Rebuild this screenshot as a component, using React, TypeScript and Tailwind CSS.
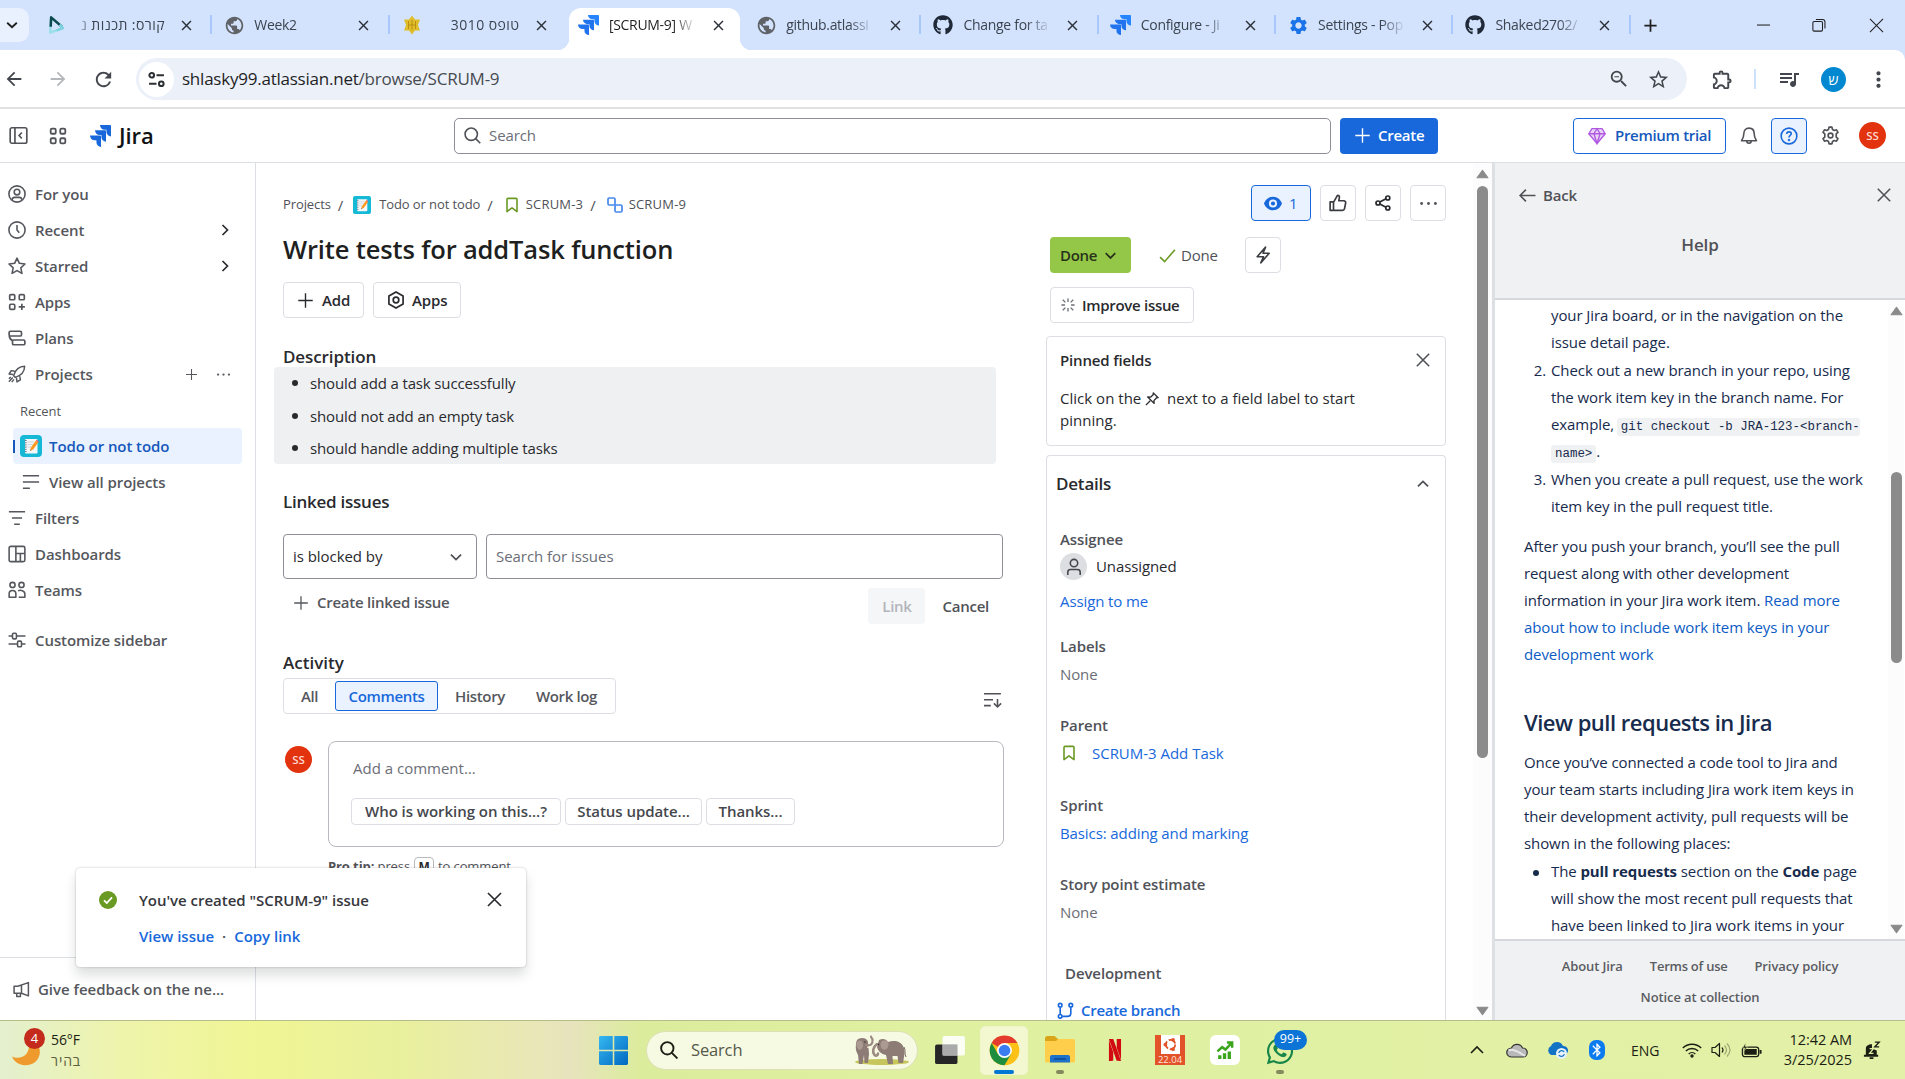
import React from "react";
import {
  MdPublic, MdSettings, MdOutlineExtension, MdQueueMusic, MdZoomOut, MdStarBorder, MdMoreVert,
  MdArrowBack, MdArrowForward, MdRefresh, MdClose, MdAdd, MdBluetooth,
} from "react-icons/md";
import { FaGithub, FaWhatsapp } from "react-icons/fa";
import { SiNetflix } from "react-icons/si";

type IconProps = { children: React.ReactNode; className?: string; sw?: number };

/* 16-unit outline icon */
const I = ({ children, className = "size-[18px]", sw = 1.4 }: IconProps) => (
  <svg viewBox="0 0 16 16" fill="none" stroke="currentColor" strokeWidth={sw} className={`shrink-0 ${className}`}>
    {children}
  </svg>
);

const Plus = ({ className }: { className?: string }) => <I className={className} sw={1.3}><path d="M8 1.2v13.6M1.2 8h13.6" /></I>;
const Cross = ({ className }: { className?: string }) => <I className={className} sw={1.4}><path d="m2.5 2.5 11 11M13.5 2.5l-11 11" /></I>;
const Chevron = ({ className }: { className?: string }) => <I className={className} sw={1.6}><path d="m3.5 5.8 4.5 4.5 4.5-4.5" /></I>;
const Dots = ({ className }: { className?: string }) => (
  <I className={className}><g fill="currentColor" stroke="none"><circle cx="2.2" cy="8" r="1.2" /><circle cx="8" cy="8" r="1.2" /><circle cx="13.8" cy="8" r="1.2" /></g></I>
);
const Bookmark = ({ className }: { className?: string }) => (
  <I className={className} sw={1.6}><path d="M3 14.6V2.4c0-.6.4-1 1-1h8c.6 0 1 .4 1 1v12.2L8 10.8z" strokeLinejoin="round" /></I>
);

const JiraMark = ({ className, a = "#1868db", b = "#2684ff" }: { className?: string; a?: string; b?: string }) => (
  <svg viewBox="0 0 24 24" className={`shrink-0 ${className}`} preserveAspectRatio="none">
    <path fill={a} d="M11.571 11.513H0a5.218 5.218 0 0 0 5.232 5.215h2.13v2.057A5.215 5.215 0 0 0 12.575 24V12.518a1.005 1.005 0 0 0-1.005-1.005z" />
    <path fill={a} d="M17.294 5.757H5.736a5.215 5.215 0 0 0 5.215 5.214h2.129v2.058a5.218 5.218 0 0 0 5.215 5.214V6.758a1.001 1.001 0 0 0-1.001-1.001z" />
    <path fill={b} d="M23.013 0H11.455a5.215 5.215 0 0 0 5.215 5.215h2.129v2.057A5.215 5.215 0 0 0 24 12.483V1.005A1.001 1.001 0 0 0 23.013 0z" />
  </svg>
);

const Notepad = ({ className }: { className?: string }) => (
  <svg viewBox="0 0 22 22" className={`shrink-0 ${className}`}>
    <rect width="22" height="22" rx="2.5" fill="#15b9d6" />
    <rect x="5" y="4" width="12.5" height="14.5" rx="1" fill="#f4f7fa" />
    <path d="M7.5 7h7M7.5 9.5h6M7.5 12h4" stroke="#c3ccd6" strokeWidth="0.8" />
    <path d="M5 5.5h1.6M5 7.7h1.6M5 9.9h1.6M5 12.1h1.6M5 14.3h1.6M5 16.5h1.6" stroke="#44546f" strokeWidth="0.8" />
    <path d="m10.2 15.8.6-3 5-7 2.4 1.7-5 7z" fill="#ff9a1f" />
    <path d="m15.8 5.8.8-1 2.3 1.6-.7 1.1z" fill="#ef5b5b" />
    <path d="m10.2 15.8.3-1.4 1 .7z" fill="#333" />
  </svg>
);

/* ------------------------------ browser chrome ------------------------------ */

const Globe = () => <MdPublic className="size-[21px] text-[#5f6368]" />;

type Tab = { icon: React.ReactNode; title: string; active?: boolean; rtl?: boolean; sep?: boolean };
const TABS: Tab[] = [
  {
    icon: (
      <svg viewBox="0 0 20 22" className="h-[22px] w-[18px]" fill="none" strokeLinejoin="round" strokeWidth="2.8">
        <path d="M3.5 2.5 2.5 19.5l14-5" stroke="#9adfe9" /><path d="M3 13 3.500 2.500l12 10.500" stroke="#0c4a50" />
        <path d="m13 10.500 3.500 4-7 2.500" stroke="#7fd2df" />
      </svg>
    ),
    title: "קורס: תכנות נ", rtl: true, sep: true,
  },
  { icon: <Globe />, title: "Week2", sep: true },
  {
    icon: (
      <svg viewBox="0 0 20 20" className="size-[20px]">
        <path d="m10 .5 3 4h5l-2 5.500 2 5.500h-5l-3 4-3-4H2l2-5.500L2 4.500h5z" fill="#e0bd2a" />
        <path d="M6.500 6v8M10 5v10M13.500 6v8M6 10h8" stroke="#b58c10" strokeWidth=".9" />
      </svg>
    ),
    title: "טופס 3010", rtl: true,
  },
  { icon: <JiraMark className="h-[20px] w-[21px]" a="#2173ee" />, title: "[SCRUM-9] W", active: true },
  { icon: <Globe />, title: "github.atlassi", sep: true },
  { icon: <FaGithub className="size-[20px] text-[#1f2937]" />, title: "Change for ta", sep: true },
  { icon: <JiraMark className="h-[20px] w-[21px]" a="#2173ee" />, title: "Configure - Ji", sep: true },
  { icon: <MdSettings className="size-[21px] text-[#1a73e8]" />, title: "Settings - Pop", sep: true },
  { icon: <FaGithub className="size-[20px] text-[#1f2937]" />, title: "Shaked2702/", sep: true },
];

function TabStrip() {
  return (
    <div className="flex h-[50px] bg-[#d3e3fd]">
      <div className="mt-2 flex h-[34px] w-[29px] shrink-0 items-center rounded-r-[10px] bg-[#e9f0fe] pl-[5px]">
        <I className="size-[14px] text-[#1f1f1f]" sw={2.2}><path d="m2.500 5.500 5.500 5 5.500-5" /></I>
      </div>
      <div className="ml-[5px] flex">
        {TABS.map((t, i) => (
          <div key={i} className="relative mt-2 flex h-[42px] w-[177.3px] items-center">
            {t.active && (
              <>
                <span className="absolute inset-y-0 right-[3px] left-[3px] rounded-t-[12px] bg-white" />
                <span className="absolute bottom-0 left-[-9px] size-3 bg-[radial-gradient(circle_at_0_0,transparent_12px,white_12.5px)]" />
                <span className="absolute right-[-9px] bottom-0 size-3 bg-[radial-gradient(circle_at_100%_0,transparent_12px,white_12.5px)]" />
              </>
            )}
            <span className="relative ml-[12px] flex w-[22px] justify-center pb-2">{t.icon}</span>
            <span
              dir={t.rtl ? "rtl" : "ltr"}
              className={`relative mb-2 ml-[9px] w-[88px] text-[14px] leading-[24px] whitespace-nowrap ${t.active ? "text-[#1f1f1f]" : "text-[#3c4450]"} ${t.rtl ? "tracking-[0.45px] [mask-image:linear-gradient(to_left,black_84%,transparent)]" : "tracking-[-0.3px] [mask-image:linear-gradient(to_right,black_72%,transparent)]"}`}
            >
              {t.title}
            </span>
            <MdClose className="relative mb-2 ml-[13px] size-[17px] text-[#2b2f36]" />
            {t.sep && <span className="absolute top-[7px] right-[-1px] h-[19px] w-[2px] bg-[#a8c7fa]" />}
          </div>
        ))}
      </div>
      <div className="flex flex-1 items-center text-[#1f1f1f]">
        <MdAdd className="ml-[10px] size-[21px]" />
        <I className="ml-[95px] size-[15px]" sw={1.1}><path d="M1 7.500h14" /></I>
        <I className="ml-[41px] size-[14px]" sw={1.2}><rect x="1" y="4" width="11" height="11" rx="1.500" /><path d="M4.500 1.600h7.500a2.800 2.800 0 0 1 2.800 2.800V12" /></I>
        <I className="ml-[43px] size-[15px]" sw={1.1}><path d="m1 1 14 14M15 1 1 15" /></I>
      </div>
    </div>
  );
}

function Toolbar() {
  return (
    <div className="h-[59px] bg-[#d3e3fd]">
      <div className="flex h-[59px] items-center rounded-tr-[10px] border-b-2 border-[#e0e1e3] bg-white pt-[1px] text-[#43474d]">
        <MdArrowBack className="ml-[3px] size-[22px]" />
        <MdArrowForward className="ml-[22px] size-[22px] text-[#b4b7bb]" />
        <MdRefresh className="ml-[23px] size-[23px]" />
        <div className="ml-[21px] flex h-[42px] w-[1551px] items-center rounded-full bg-[#ebf0f9]">
          <span className="ml-[3px] flex size-[35px] items-center justify-center rounded-full bg-white">
            <I className="size-[17px] text-[#2c2f33]" sw={1.9}><circle cx="3.500" cy="4" r="2.200" /><path d="M8 4h7M1 12h7" /><circle cx="12.500" cy="12" r="2.200" /></I>
          </span>
          <span className="ml-[8px] flex-1 text-[17px] tracking-[-0.23px] text-[#1f1f1f]">
            shlasky99.atlassian.net<span className="text-[#474b50]">/browse/SCRUM-9</span>
          </span>
          <MdZoomOut className="mr-[17px] size-[22px]" />
          <MdStarBorder className="mr-[17px] size-[23px]" />
        </div>
        <MdOutlineExtension className="ml-[24px] size-[23px]" />
        <span className="ml-[20px] h-[20px] w-[2px] bg-[#cfe0fb]" />
        <MdQueueMusic className="ml-[21px] size-[24px]" />
        <span className="ml-[20px] flex size-[25px] items-center justify-center rounded-full bg-[#0288d1] text-[14px] text-white">ש</span>
        <MdMoreVert className="ml-[20px] size-[25px]" />
      </div>
    </div>
  );
}

/* ------------------------------ Jira top bar ------------------------------ */

const Avatar = ({ className = "" }: { className?: string }) => (
  <span className={`flex size-[27px] shrink-0 items-center justify-center rounded-full bg-[#e2330e] text-[11.5px] font-semibold text-[#ffd9cf] ${className}`}>SS</span>
);

function JiraNav() {
  return (
    <div className="flex h-[54px] items-center border-b border-[#dcdfe4] text-[#505258]">
      <I className="ml-[9px] size-[19px]"><rect x="1" y="1.500" width="14" height="13" rx="1.500" /><path d="M5 1.500v13M10.800 5.500 8.500 8l2.300 2.500" /></I>
      <I className="ml-[21px] size-[18px]" sw={1.6}><rect x="1.500" y="1.500" width="4.500" height="4.500" rx="1.200" /><rect x="10" y="1.500" width="4.500" height="4.500" rx="1.200" /><rect x="1.500" y="10" width="4.500" height="4.500" rx="1.200" /><rect x="10" y="10" width="4.500" height="4.500" rx="1.200" /></I>
      <JiraMark className="ml-[23px] h-[22px] w-[21px]" b="#1868db" />
      <span className="ml-[8px] w-[37px] pb-[2px] text-[22px] leading-[28px] font-semibold tracking-[-0.1px] text-[#101214]">Jira</span>
      <div className="ml-[298px] flex h-[36px] w-[877px] items-center rounded-[5px] border border-[#8c8f97] pl-[9px]">
        <I className="size-[17px]" sw={1.5}><circle cx="6.800" cy="6.800" r="5.800" /><path d="m11 11 4.300 4.300" /></I>
        <span className="ml-[8px] text-[15px] tracking-[-0.1px] text-[#6b6e76]">Search</span>
      </div>
      <button className="ml-[9px] flex h-[36px] w-[98px] items-center rounded-[4px] bg-[#1868db] pl-[14px] text-[15px] font-semibold tracking-[-0.25px] text-white">
        <Plus className="mr-[7px] size-[17px]" />Create
      </button>
      <button className="ml-[135px] flex h-[36px] w-[153px] items-center rounded-[4px] border border-[#1868db] pl-[14px] text-[15px] font-semibold tracking-[-0.3px] text-[#1558bc]">
        <I className="mr-[9px] size-[18px] text-[#af59e0]" sw={1.2}><path fill="#ead5f9" d="M3.500 1.500h9L15.300 6 8 14.700.7 6z" strokeLinejoin="round" /><path d="M.7 6h14.600M5.200 6 8 14.500 10.800 6 8 1.500z" /></I>
        Premium trial
      </button>
      <I className="ml-[14px] size-[18px]"><path d="M8 1C5 1 3.400 3.200 3.400 6c0 3-.9 4.500-2 6.200h13.200c-1.100-1.700-2-3.200-2-6.200C12.600 3.200 11 1 8 1zM6 12.500a2 2 0 0 0 4 0" strokeLinejoin="round" /></I>
      <span className="ml-[13px] flex h-[36px] w-[36px] items-center justify-center rounded-[4px] border border-[#1868db] bg-[#e9f2fe] text-[#1868db]">
        <I className="size-[18px]"><circle cx="8" cy="8" r="7" /><path d="M6 6.300C6 5 6.900 4.300 8 4.300s2 .7 2 1.800C10 7.500 8 7.600 8 9.300" /><circle cx="8" cy="11.500" r=".4" /></I>
      </span>
      <I className="ml-[14px] size-[19px]"><path d="M6.800 1h2.400l.5 2 1.400.8 2-.6 1.200 2.100L12.800 6.700v2.600l1.500 1.400-1.200 2.100-2-.6-1.400.8-.5 2H6.800l-.5-2-1.400-.8-2 .6-1.200-2.100 1.500-1.400V6.700L1.700 5.300l1.200-2.100 2 .6L6.300 3z" strokeLinejoin="round" /><circle cx="8" cy="8" r="2" /></I>
      <Avatar className="ml-[19px]" />
    </div>
  );
}

/* ------------------------------ sidebar ------------------------------ */

const StarIcon = <I><path d="m8 1 2.100 4.600 5 .6-3.700 3.400 1 5L8 12.100l-4.400 2.500 1-5L.9 6.200l5-.6z" strokeLinejoin="round" /></I>;

function NavRow({ icon, label, right }: { icon: React.ReactNode; label: string; right?: React.ReactNode }) {
  return (
    <div className="flex h-[36px] shrink-0 items-center pl-[8px]">
      {icon}
      <span className="ml-[9px] flex-1">{label}</span>
      {right}
    </div>
  );
}

const ChevR = <I className="mr-[22px] size-[16px] text-[#292a2e]" sw={1.7}><path d="M5.500 3 10.500 8l-5 5" /></I>;

function Sidebar() {
  return (
    <aside className="flex w-[256px] shrink-0 flex-col border-r border-[#dcdfe4] pt-[13px] text-[15px] font-semibold tracking-[-0.08px] text-[#55575d]">
      <NavRow label="For you" icon={<I><circle cx="8" cy="8" r="7.200" /><circle cx="8" cy="6.300" r="2.500" /><path d="M3.500 13.300c.3-1.700 1.300-2.300 2.500-2.300h4c1.200 0 2.200.6 2.500 2.300" /></I>} />
      <NavRow label="Recent" right={ChevR} icon={<I><circle cx="8" cy="8" r="7.200" /><path d="M8 3.500V8l2 2.500" /></I>} />
      <NavRow label="Starred" right={ChevR} icon={StarIcon} />
      <NavRow label="Apps" icon={<I sw={1.5}><rect x="1.500" y="1.500" width="4.500" height="4.500" rx="1" /><rect x="10" y="1.500" width="4.500" height="4.500" rx="1" /><rect x="1.500" y="10" width="4.500" height="4.500" rx="1" /><path d="M12.300 9.500v5.500M9.500 12.300H15" /></I>} />
      <NavRow label="Plans" icon={<I sw={1.5}><rect x="1" y="2" width="11" height="4.200" rx="1.200" /><rect x="4" y="9.800" width="11" height="4.200" rx="1.200" /><path d="M1.200 6c0 2.300 1 3.500 3 4.500" /></I>} />
      <NavRow
        label="Projects"
        icon={<I sw={1.3}><path d="M5 9.500C6.500 4.500 9.500 1.300 14.800 1.200c-.1 5.300-3.300 8.300-8.300 9.800zM6 5.500 2.800 5 1 8l3.500.5M10.500 10l.5 3.200L8 15l-.5-3.500M4.200 11.200.8 14.800M2.500 10.700l-1.700 1.500M5.300 12.800l-2 2.400" strokeLinejoin="round" /></I>}
        right={<><Plus className="size-[13px]" /><Dots className="mr-[24px] ml-[18px] size-[15px]" /></>}
      />
      <div className="flex h-[36px] shrink-0 items-center pt-[4px] pl-[20px] text-[13px] font-normal">Recent</div>
      <div className="ml-[13px] flex h-[36px] w-[229px] shrink-0 items-center rounded-[4px] bg-[#e9f2fe] text-[#1558bc]">
        <span className="h-[13px] w-[2px] bg-[#1558bc]" />
        <Notepad className="ml-[5px] size-[22px] rounded-[4px]" />
        <span className="ml-[7px]">Todo or not todo</span>
      </div>
      <div className="flex h-[36px] shrink-0 items-center pl-[22px]">
        <I><path d="M.8 2.500h14.400M.8 8h14.400M.8 13.500H7" /></I>
        <span className="ml-[9px]">View all projects</span>
      </div>
      <NavRow label="Filters" icon={<I><path d="M.8 2.500h14.400M3.500 8h9M5.500 13.500h5" /></I>} />
      <NavRow label="Dashboards" icon={<I><rect x="1" y="1.200" width="14" height="13.600" rx="1.500" /><path d="M7 1.200v13.600M7 7.500h8M11 7.500v7" /></I>} />
      <NavRow label="Teams" icon={<I><circle cx="4" cy="3.500" r="2.300" /><circle cx="12" cy="3.500" r="2.300" /><path d="M1 14.500v-3C1 9.800 2 8.500 4 8.500s3 1.200 3 3v3zM9 8.700c2-1 6-.2 6 2.800v3H9.500" strokeLinejoin="round" /></I>} />
      <div className="h-[14px] shrink-0" />
      <NavRow label="Customize sidebar" icon={<I><path d="M.5 4.500h3.500M8 4.500h7.500M.5 11.500H8M12 11.500h3.500" /><rect x="4" y="2" width="3.500" height="5" rx="1" /><rect x="8.500" y="9" width="3.500" height="5" rx="1" /></I>} />
      <div className="mt-auto flex h-[63px] items-center border-t border-[#dcdfe4] pl-[13px]">
        <I className="size-[17px]"><path d="M1 5h3.500L14.500 1.500v12.500L8 11.500H1zM8 4v7.500M3.500 11.500v3H7v-3" strokeLinejoin="round" /></I>
        <span className="ml-[8px] tracking-[-0.02px]">Give feedback on the ne...</span>
      </div>
    </aside>
  );
}

/* ------------------------------ issue body ------------------------------ */

const Btn = ({ children, className = "" }: { children: React.ReactNode; className?: string }) => (
  <button className={`flex h-[36px] shrink-0 items-center rounded-[4px] border border-[#dcdee3] ${className}`}>{children}</button>
);

function IssueLeft() {
  return (
    <section className="flex w-[721px] shrink-0 flex-col pt-[32px]">
      <div className="flex h-[20px] items-center text-[13px] tracking-[-0.1px] text-[#505258]">
        Projects<span className="mx-[7px] text-[15px]">/</span>
        <Notepad className="ml-[3px] size-[18px]" />
        <span className="ml-[8px]">Todo or not todo</span><span className="mx-[7px] text-[15px]">/</span>
        <Bookmark className="ml-[4px] size-[16px] text-[#6a9a23]" />
        <span className="ml-[6px] tracking-[0.2px]">SCRUM-3</span><span className="mx-[7px] text-[15px]">/</span>
        <I className="ml-[4px] size-[16px] text-[#4688ec]" sw={1.7}><rect x="1" y="1" width="7" height="7" rx="1.200" /><rect x="8" y="8" width="7" height="7" rx="1.200" /></I>
        <span className="ml-[6px] tracking-[0.2px]">SCRUM-9</span>
      </div>
      <h1 className="mt-[16px] text-[25.5px] leading-[36px] font-semibold tracking-[-0.15px] text-[#1e1f21]">Write tests for addTask function</h1>
      <div className="mt-[15px] flex gap-[9px] text-[15px] font-semibold tracking-[-0.15px] text-[#292a2e]">
        <Btn className="w-[81px] pl-[13px]"><Plus className="mr-[8px] size-[17px]" />Add</Btn>
        <Btn className="w-[88px] pl-[13px]"><I className="mr-[7px] size-[18px]" sw={1.5}><path d="m8 .8 6.300 3.600v7.200L8 15.200l-6.300-3.600V4.400z" strokeLinejoin="round" /><circle cx="8" cy="8" r="2.500" /></I>Apps</Btn>
      </div>
      <h2 className="mt-[29px] h-[20px] text-[17px] leading-[20px] font-semibold tracking-[-0.1px] text-[#292a2e]">Description</h2>
      <ul className="ml-[-9px] h-[97px] w-[722px] rounded-[4px] bg-[#eff0f2] text-[15px] tracking-[-0.14px] text-[#292a2e]">
        {["should add a task successfully", "should not add an empty task", "should handle adding multiple tasks"].map((t) => (
          <li key={t} className="flex h-[32.5px] items-center pl-[18px]">
            <span className="mr-[12px] size-[6px] rounded-full bg-[#292a2e]" />{t}
          </li>
        ))}
      </ul>
      <h2 className="mt-[26px] text-[17px] leading-[24px] font-semibold tracking-[-0.25px] text-[#292a2e]">Linked issues</h2>
      <div className="mt-[20px] flex gap-[9px] text-[15px] tracking-[-0.05px]">
        <div className="flex h-[45px] w-[194px] items-center justify-between rounded-[4px] border border-[#8c8f97] pr-[11px] pl-[9px] text-[#292a2e]">
          is blocked by<Chevron className="size-[18px] text-[#505258]" />
        </div>
        <div className="flex h-[45px] w-[517px] items-center rounded-[4px] border border-[#8c8f97] pl-[9px] text-[#6b6e76]">Search for issues</div>
      </div>
      <div className="mt-[9px] flex h-[36px] text-[15px] font-semibold tracking-[-0.25px]">
        <div className="flex flex-1 items-center pb-[7px] pl-[10px] text-[#55575d]"><Plus className="mr-[8px] size-[16px]" />Create linked issue</div>
        <div className="mr-[17px] flex w-[57px] items-center justify-center rounded-[4px] bg-[#f5f6f7] text-[#b2b5bb]">Link</div>
        <div className="mr-[15px] flex items-center text-[#505258]">Cancel</div>
      </div>
      <h2 className="mt-[27px] text-[17px] leading-[24px] font-semibold text-[#292a2e]">Activity</h2>
      <div className="mt-[3px] flex items-center justify-between">
        <div className="flex h-[36px] w-[333px] items-center rounded-[4px] border border-[#dcdee3] pl-[2px] text-[15px] font-semibold tracking-[-0.35px] text-[#55575d]">
          <span className="w-[47px] text-center">All</span>
          <span className="ml-[2px] flex h-[30px] w-[103px] items-center justify-center rounded-[3px] border border-[#1868db] bg-[#e9f2fe] text-[#1868db]">Comments</span>
          <span className="w-[84px] text-center">History</span>
          <span className="w-[89px] text-center">Work log</span>
        </div>
        <I className="mt-[8px] mr-[2px] size-[18px] text-[#505258]"><path d="M0 2.500h15M0 7.800h8M0 13h6M12 7v7M8.800 11l3.200 3.200L15.200 11" /></I>
      </div>
      <div className="mt-[27px] flex">
        <Avatar className="mt-[5px] ml-[2px]" />
        <div className="ml-[16px] h-[106px] w-[677px] rounded-[8px] border border-[#b7b9be] pt-[14px] pl-[22px]">
          <div className="pl-[2px] text-[15px] leading-[24px] text-[#6b6e76]">Add a comment…</div>
          <div className="mt-[18px] flex gap-[4px] text-[15px] font-semibold tracking-[-0.05px] text-[#45474d]">
            {[["Who is working on this...?", "w-[210px]"], ["Status update...", "w-[137px]"], ["Thanks...", "w-[89px]"]].map(([t, w]) => (
              <span key={t} className={`flex h-[27px] items-center justify-center rounded-[4px] border border-[#dcdee3] whitespace-nowrap ${w}`}>{t}</span>
            ))}
          </div>
        </div>
      </div>
      <div className="mt-[10px] ml-[45px] flex h-[20px] items-center text-[13px] tracking-[-0.1px] text-[#505258]">
        <b className="font-bold">Pro tip:</b>&nbsp;press
        <kbd className="mx-[4px] flex h-[20px] w-[20px] items-center justify-center rounded-[4px] border border-[#b7b9be] font-sans text-[12px] font-bold text-[#292a2e]">M</kbd>
        to comment
      </div>
    </section>
  );
}

const Label = ({ children, className }: { children: React.ReactNode; className: string }) => (
  <div className={`leading-[20px] font-semibold text-[#505258] ${className}`}>{children}</div>
);

function IssueRight() {
  return (
    <section className="ml-[42px] flex w-[400px] shrink-0 flex-col pt-[22px] text-[15px] tracking-[-0.1px] text-[#292a2e]">
      <div className="flex justify-end gap-[9px]">
        <button className="flex h-[36px] w-[60px] items-center rounded-[4px] border border-[#1868db] bg-[#e9f2fe] pl-[12px] text-[#1868db]">
          <svg viewBox="0 0 20 16" className="mr-[7px] h-[15px] w-[18px]"><path fill="currentColor" d="M10 .5C5 .5 1.500 4 0 8c1.500 4 5 7.500 10 7.500S18.500 12 20 8C18.500 4 15 .5 10 .5z" /><circle cx="10" cy="8" r="4.500" fill="#e9f2fe" /><circle cx="10" cy="8" r="2.300" fill="currentColor" /></svg>
          1
        </button>
        <Btn className="w-[36px] justify-center text-[#3b3d42]"><I sw={1.5}><path d="M1 7h3v7.500H1zM4 7.500 7.500 1.200c1.500 0 2 1 1.700 2.200L8.700 6H13c1.500 0 2 1 1.800 2l-1 5c-.2 1-.9 1.500-1.800 1.500H4" strokeLinejoin="round" /></I></Btn>
        <Btn className="w-[36px] justify-center"><I className="size-[16px]" sw={1.7}><circle cx="3" cy="8" r="2" /><circle cx="12.800" cy="3" r="2" /><circle cx="12.800" cy="13" r="2" /><path d="m4.800 7 6.200-3.200M4.800 9l6.200 3.200" /></I></Btn>
        <Btn className="w-[36px] justify-center"><Dots className="size-[19px] text-[#505258]" /></Btn>
      </div>
      <div className="mt-[16px] flex items-center pl-[4px]">
        <button className="flex h-[36px] w-[81px] items-center rounded-[4px] bg-[#94c748] pl-[10px] font-semibold tracking-[-0.3px] text-[#28311b]">Done<Chevron className="ml-[5px] size-[17px]" /></button>
        <I className="ml-[28px] size-[17px] text-[#6a9a23]" sw={1.5}><path d="m1 9.500 4.300 4.300L15 2.500" /></I>
        <span className="ml-[5px] w-[38px] tracking-[-0.2px] text-[#505258]">Done</span>
        <Btn className="ml-[26px] w-[36px] justify-center text-[#3b3d42]"><I className="size-[18px]" sw={1.4}><path d="M10.300 1 2.800 9.500H8.500L6 15 13.500 6.500H8z" strokeLinejoin="round" /></I></Btn>
      </div>
      <Btn className="mt-[14px] ml-[4px] w-[144px] pl-[10px] font-semibold tracking-[-0.3px]">
        <I className="mr-[7px] size-[14px] text-[#6b6e76]" sw={1.5}><path d="M8 .5v4M8 11.500v4M.5 8h4M11.500 8h4M2 2l3 3M11 11l3 3M14 2l-3 3M5 11l-3 3" /></I>Improve issue
      </Btn>
      <div className="mt-[13px] h-[110px] shrink-0 rounded-[4px] border border-[#dcdee3] pt-[11px] pr-[13px] pl-[13px]">
        <div className="flex h-[24px] items-center justify-between font-semibold tracking-[-0.15px]">Pinned fields<Cross className="size-[18px] text-[#505258]" /></div>
        <p className="mt-[15px] leading-[22px] tracking-[0.02px]">
          Click on the <I className="mb-[2px] inline size-[14px]" sw={1.5}><path d="m9.500 1 5.500 5.500-2 .3-2.800 3 .2 3.200-7.300-7.300 3.200.2 3-2.800zM6 10l-5 5" strokeLinejoin="round" /></I>&nbsp; next to a field label to start<br />pinning.
        </p>
      </div>
      <div className="mt-[9px] flex-1 rounded-t-[4px] border border-b-0 border-[#dcdee3] pt-[15px] pr-[13px] pl-[13px]">
        <div className="ml-[-4px] flex h-[26px] items-center justify-between text-[17px] font-semibold tracking-[-0.2px]">Details<Chevron className="size-[18px] rotate-180 text-[#505258]" /></div>
        <Label className="mt-[32px]">Assignee</Label>
        <div className="mt-[4px] flex h-[27px] items-center">
          <span className="flex size-[27px] items-center justify-center rounded-full bg-[#dddee1] text-[#44474d]"><I className="size-[18px]"><circle cx="8" cy="4.500" r="3.300" /><path d="M2.500 15v-2.500c0-1.500 1-2.300 2.500-2.300h6c1.500 0 2.500.8 2.500 2.300V15" /></I></span>
          <span className="ml-[9px]">Unassigned</span>
        </div>
        <div className="mt-[11px] leading-[20px] text-[#1868db]">Assign to me</div>
        <Label className="mt-[25px]">Labels</Label>
        <div className="mt-[8px] leading-[20px] text-[#6b6e76]">None</div>
        <Label className="mt-[31px]">Parent</Label>
        <div className="mt-[8px] flex h-[20px] items-center text-[#1868db]"><Bookmark className="ml-[1px] size-[16px] text-[#6a9a23]" /><span className="ml-[15px] tracking-[-0.02px]">SCRUM-3 Add Task</span></div>
        <Label className="mt-[32px]">Sprint</Label>
        <div className="mt-[8px] leading-[20px] text-[#1868db]">Basics: adding and marking</div>
        <Label className="mt-[31px]">Story point estimate</Label>
        <div className="mt-[8px] leading-[20px] text-[#6b6e76]">None</div>
        <Label className="mt-[41px] ml-[5px]">Development</Label>
        <div className="mt-[17px] ml-[-3px] flex h-[20px] items-center font-semibold tracking-[-0.28px] text-[#1868db]">
          <I className="mr-[7px] size-[17px]" sw={1.5}><circle cx="3" cy="3" r="1.700" /><circle cx="3" cy="13.500" r="1.700" /><circle cx="13" cy="3" r="1.700" /><path d="M3 5v6.500M13 5v5.500c0 2-1 3-3 3H5" /></I>Create branch
        </div>
      </div>
    </section>
  );
}

const Arrow = ({ down }: { down?: boolean }) => (
  <svg viewBox="0 0 12 9" className={`h-[10px] w-[13px] ${down ? "rotate-180" : ""}`}><path fill="#8a8a8a" stroke="#8a8a8a" strokeLinejoin="round" d="M6 1 11 8H1z" /></svg>
);

/* ------------------------------ help panel ------------------------------ */

const Item = ({ n, children }: { n: React.ReactNode; children: React.ReactNode }) => (
  <div className="mb-[1px] flex">
    <span className="flex w-[22px] shrink-0 justify-end">{n}</span>
    <p className="ml-[5px]">{children}</p>
  </div>
);

function Help() {
  return (
    <aside className="flex w-[413px] shrink-0 flex-col border-l-[3px] border-[#dcdfe4] text-[15px] tracking-[-0.09px] whitespace-nowrap">
      <div className="h-[137px] shrink-0 border-b-2 border-[#d5d8dc] bg-[#f0f1f2] pt-[20px] text-[#505258]">
        <div className="flex h-[24px] items-center pr-[12px] pl-[24px] font-semibold tracking-[-0.2px]">
          <I className="mr-[7px] size-[17px]" sw={1.5}><path d="M15.500 8H1.200M6.500 2.500 1 8l5.500 5.500" /></I>
          <span className="flex-1">Back</span><Cross className="size-[18px]" />
        </div>
        <div className="mt-[24px] text-center text-[17px] leading-[28px] font-semibold">Help</div>
      </div>
      <div className="flex h-[639px] shrink-0">
        <div className="w-[393px] shrink-0 overflow-hidden pt-[2px] pl-[29px] leading-[27px] text-[#172b4d]">
          <Item n="">your Jira board, or in the navigation on the<br />issue detail page.</Item>
          <Item n="2.">
            Check out a new branch in your repo, using<br />the work item key in the branch name. For<br />example,{" "}
            <code className="ml-[-1px] rounded-[3px] bg-[#f0f1f2] py-[2px] pl-[4px] font-['Liberation_Mono',monospace] text-[12.45px] leading-none tracking-normal">git checkout -b JRA-123-&lt;branch-</code><br />
            <code className="rounded-[3px] bg-[#f0f1f2] px-[4px] py-[2px] font-['Liberation_Mono',monospace] text-[12.45px] leading-none tracking-normal">name&gt;</code>.
          </Item>
          <Item n="3.">When you create a pull request, use the work<br />item key in the pull request title.</Item>
          <p className="mt-[13px]">
            After you push your branch, you’ll see the pull<br />request along with other development<br />information in your Jira work item. <span className="text-[#0c5bc4]">Read more<br />about how to include work item keys in your<br />development work</span>
          </p>
          <h3 className="mt-[38px] text-[22px] leading-[32px] font-semibold tracking-[-0.5px]">View pull requests in Jira</h3>
          <p className="mt-[11px] mb-[1px]">Once you’ve connected a code tool to Jira and<br />your team starts including Jira work item keys in<br />their development activity, pull requests will be<br />shown in the following places:</p>
          <Item n={<span className="mt-[12px] mr-[7px] size-[6px] rounded-full bg-[#172b4d]" />}>
            The <b>pull requests</b> section on the <b>Code</b> page<br />will show the most recent pull requests that<br />have been linked to Jira work items in your
          </Item>
        </div>
        <div className="flex w-[16px] flex-col items-center bg-[#fcfcfc] pt-[6px]">
          <Arrow />
          <span className="mt-[156px] h-[191px] w-[11px] rounded-full bg-[#8b8b8b]" />
          <span className="mt-[261px]"><Arrow down /></span>
        </div>
      </div>
      <div className="flex-1 border-t-2 border-[#d5d8dc] bg-[#f0f1f2] pt-[15px] text-[13px] leading-[20px] font-semibold tracking-[-0.1px] text-[#5a5c62]">
        <div className="flex justify-center gap-[27px]"><span>About Jira</span><span className="tracking-[-0.25px]">Terms of use</span><span>Privacy policy</span></div>
        <div className="mt-[11px] text-center">Notice at collection</div>
      </div>
    </aside>
  );
}

function Flag() {
  return (
    <div className="absolute top-[868px] left-[76px] flex h-[99px] w-[450px] rounded-[4px] bg-white text-[15px] font-semibold tracking-[-0.02px] shadow-[0_8px_12px_rgba(30,31,33,0.15),0_0_2px_rgba(30,31,33,0.31)]">
      <svg viewBox="0 0 18 18" className="mt-[23px] ml-[23px] size-[18px]"><circle cx="9" cy="9" r="9" fill="#6a9a23" /><path d="m5 9.300 2.800 2.700L13 6.300" fill="none" stroke="#fff" strokeWidth="1.800" /></svg>
      <div className="ml-[22px] flex-1 pt-[22px] leading-[20px]">
        <div className="text-[#35373c]">You've created "SCRUM-9" issue</div>
        <div className="mt-[16px] text-[#1868db]">View issue<span className="mx-[8px] text-[#505258]">·</span>Copy link</div>
      </div>
      <Cross className="mt-[22px] mr-[22px] size-[19px] text-[#292a2e]" />
    </div>
  );
}

/* ------------------------------ taskbar ------------------------------ */

const Elephants = () => (
  <svg viewBox="0 0 56 32" className="h-[32px] w-[56px]">
    <ellipse cx="28" cy="28" rx="27" ry="3" fill="#c6c65c" />
    <g fill="#8d7b76">
      <path d="M2 10Q2 4 8 4q5 0 6 4l1 12-1 9h-3.500l-.5-8-1.500 9H5L4 21Q1 16 2 10z" />
      <path d="M25 6c4-2 7-1 9 2 6-2 13-1 15.500 5 2 5 .5 9-.5 16h-4.500l-1-7h-5l.5 8h-5l-2-9c-5-1-8-4-9-8z" />
    </g>
    <path d="M12.500 11c4 1 6.500-1 6-5 0-2-1.500-2-1.500-3.500" fill="none" stroke="#9c8a83" strokeWidth="2.200" strokeLinecap="round" />
    <path d="M23 10c-4 3-5 8-2.500 11 2 1.500 3.500 0 3.500-1.500" fill="none" stroke="#9c8a83" strokeWidth="2.600" strokeLinecap="round" />
    <path d="M50 13c2 3 0 6 2 10" fill="none" stroke="#7a6964" strokeWidth="1" />
    <path d="M3 8c3-3 6-1 6 3s-3 6-5 4-2-5-1-7zM28 7c4-2 7 0 6.500 4S31 17 28.500 15 26 9 28 7z" fill="#ab9a92" />
    <circle cx="11" cy="8" r=".7" fill="#2b211f" /><circle cx="24.500" cy="10.500" r=".7" fill="#2b211f" />
    <path d="m13 13 3 1M24 16l-2.500 1" stroke="#fff3dc" strokeWidth="1" />
  </svg>
);

function Taskbar() {
  return (
    <footer className="flex h-[59px] items-center border-t border-[#b5bd8b] bg-[linear-gradient(90deg,#e4f0cf_0px,#eef4ab_120px,#f0f594_260px,#e9f09d_400px,#e9e6b8_540px,#e7e3bd_570px,#dcec9d_640px,#dff0a0_900px,#e3f1a8_1905px)] text-[#1c1e14]">
      <div className="relative ml-[12px] h-[40px] w-[39px] shrink-0">
        <svg viewBox="0 0 28 28" className="mt-[10px] size-[28px]"><path d="M27 7.500a14 13 0 1 1-27 9c6 3 17 1 17-11z" fill="#ef9a2c" /></svg>
        <span className="absolute top-[-2px] left-[12px] flex size-[21px] items-center justify-center rounded-full bg-[#c42b1c] text-[13px] text-white">4</span>
      </div>
      <div className="w-[548px] text-[14px] leading-[21px] tracking-[-0.1px]"><div>56°F</div><div className="tracking-[0.9px] text-[#5d6042]">בהיר</div></div>
      <svg viewBox="0 0 30 30" className="size-[29px]"><defs><linearGradient id="w" x1="0" y1="0" x2="1" y2="1"><stop stopColor="#35b8f1" /><stop offset="1" stopColor="#0067c0" /></linearGradient></defs><path fill="url(#w)" d="M0 1.500Q0 0 1.500 0h12.700v14.200H0zM15.800 0h12.700Q30 0 30 1.500v12.700H15.800zM0 15.800h14.200V30H1.500Q0 30 0 28.500zM15.800 15.800H30v12.700q0 1.500-1.500 1.500H15.800z" /></svg>
      <div className="ml-[18px] flex h-[39px] w-[272px] items-center rounded-full border border-[#dce0b4] bg-[#f7fae3]">
        <I className="ml-[13px] size-[18px]" sw={1.7}><circle cx="6.500" cy="6.500" r="5.500" /><path d="m10.500 10.500 5 5" /></I>
        <span className="ml-[13px] flex-1 text-[16.5px] tracking-[-0.15px] text-[#55584a]">Search</span>
        <span className="mr-[7px]"><Elephants /></span>
      </div>
      <svg viewBox="0 0 32 30" className="ml-[17px] h-[28px] w-[30px]"><rect y="9" width="24" height="21" rx="2" fill="#262626" /><rect x="8" width="24" height="21" rx="2" fill="#fff" fillOpacity=".88" /><path d="M8 9h16v12H8z" fill="#aaa" /></svg>
      <div className="ml-[15px] flex h-[49px] w-[48px] flex-col items-center rounded-[5px] border border-[#f1f5cb] bg-[#f3f8d0] pt-[8px]">
        <svg viewBox="0 0 48 48" className="size-[31px] shrink-0">
          <circle cx="24" cy="24" r="23" fill="#fbc116" />
          <path d="M24 24 4 12.500A23 23 0 0 1 43.900 12.500H24z" fill="#e33b2e" /><path d="M4.100 12.500A23 23 0 0 0 24 47l10-17.200L24 24 14 29.800z" fill="#1e8e3e" />
          <circle cx="24" cy="24" r="11.500" fill="#fff" /><circle cx="24" cy="24" r="9" fill="#3a7df0" />
        </svg>
        <span className="mt-[4px] h-[4px] w-[20px] shrink-0 rounded-full bg-[#0078d4]" />
      </div>
      <div className="ml-[17px] flex h-[49px] flex-col items-center pt-[10px]">
        <svg viewBox="0 0 30 27" className="h-[27px] w-[30px] shrink-0"><path d="M0 2.500C0 1 1 0 2.500 0h7L13 3v6H0z" fill="#d9a417" /><path d="M0 5h11l2-2h15.500q1.500 0 1.500 1.500V25q0 1.500-1.500 1.500h-27Q0 26.500 0 25z" fill="#ffcf4b" /><path d="M5 26.500V21q0-2 2-2h16q2 0 2 2v5.500z" fill="#1b72c8" /><path d="M9 23h12" stroke="#0a4c93" strokeWidth="1.500" /></svg>
        <span className="mt-[7px] h-[4px] w-[8px] shrink-0 rounded-full bg-[#85895e]" />
      </div>
      <SiNetflix className="ml-[29px] size-[22px] text-[#d20a11]" />
      <div className="ml-[29px] flex h-[30px] w-[30px] flex-col items-center bg-[#e3532a]">
        <span className="flex h-[19px] w-[19px] items-center justify-center bg-white"><svg viewBox="0 0 16 16" className="size-[15px]" fill="none" stroke="#e3532a" strokeWidth="2"><circle cx="8" cy="8" r="5" strokeDasharray="8.500 2" /><circle cx="2.500" cy="8" r="1" /><circle cx="10.700" cy="3" r="1" /><circle cx="10.700" cy="13" r="1" /></svg></span>
        <span className="text-[9.5px] leading-[11px] text-[#ffe3da]">22.04</span>
      </div>
      <div className="ml-[25px] flex size-[30px] items-center justify-center rounded-[6px] bg-white">
        <svg viewBox="0 0 20 20" className="size-[19px]" fill="none" stroke="#3aa51c" strokeWidth="2.600"><path d="M4 19v-4M9 19v-6M14 19v-8" strokeWidth="3.500" /><path d="m1.500 11 5-4.500L10 9l6-6.500M11.500 1.500H17V7" /></svg>
      </div>
      <div className="relative ml-[25px] flex h-[49px] w-[30px] flex-col items-center pt-[10px]">
        <FaWhatsapp className="size-[30px] shrink-0 text-[#158548]" />
        <span className="mt-[4px] h-[4px] w-[8px] shrink-0 rounded-full bg-[#85895e]" />
        <span className="absolute top-[4px] left-[9px] flex h-[20px] w-[33px] items-center justify-center rounded-full bg-[#0b74d6] text-[12.5px] text-white">99+</span>
      </div>
      <I className="ml-[174px] size-[16px]" sw={1.6}><path d="m2 11 6-6 6 6" /></I>
      <svg viewBox="0 0 22 16" className="ml-[21px] h-[16px] w-[22px]"><path d="M6 15a5 4.500 0 0 1-.5-9A6 6 0 0 1 16.500 6 4.500 4.500 0 0 1 17 15z" fill="#b9b9b9" stroke="#333" strokeWidth="1.200" /><path d="M2.500 8.500C6 6 12 9 19 14" stroke="#e6e6e6" strokeWidth="2" fill="none" /></svg>
      <svg viewBox="0 0 22 18" className="ml-[18px] h-[18px] w-[22px]"><path d="M5 14A5 5 0 0 1 5 5a6.500 6.500 0 0 1 12 0 4.500 4.500 0 0 1 1 9z" fill="#1272c4" /><circle cx="15.500" cy="12.500" r="5.500" fill="#e8f2fb" /><path d="M12.700 12a3 3 0 0 1 5.500-1M18.300 13a3 3 0 0 1-5.500 1" fill="none" stroke="#1272c4" strokeWidth="1.200" /></svg>
      <span className="ml-[21px] flex h-[20px] w-[16px] items-center justify-center rounded-[7px] bg-[#0a7cf0]"><MdBluetooth className="size-[16px] text-white" /></span>
      <span className="ml-[26px] w-[30px] text-[14px]">ENG</span>
      <svg viewBox="0 0 20 16" className="ml-[21px] h-[16px] w-[20px]" fill="none" stroke="currentColor" strokeWidth="1.400"><path d="M.8 6a13 13 0 0 1 18.400 0M3.800 9a8.800 8.800 0 0 1 12.400 0M6.700 12a4.700 4.700 0 0 1 6.600 0" /><circle cx="10" cy="14" r="1" fill="currentColor" /></svg>
      <svg viewBox="0 0 20 16" className="ml-[9px] h-[16px] w-[20px]" fill="none" stroke="currentColor" strokeWidth="1.200"><path d="M1 5.500h3L8.500 1.500v13L4 10.500H1zM11 5.500q2 2.500 0 5" strokeLinejoin="round" /><path d="M13.500 3.500q4 4.500 0 9M16 1.500q6 6.500 0 13" opacity=".35" /></svg>
      <svg viewBox="0 0 22 16" className="ml-[10px] h-[17px] w-[21px]"><rect x="1.500" y="4.500" width="17" height="10" rx="2.500" fill="none" stroke="currentColor" strokeWidth="1.400" /><path d="M3.500 6.500h13v6h-13zM19.500 7.500h2v4h-2z" fill="currentColor" /><path d="M5 0 1.500 5.500H4L2.500 9l4.500-5H4.500z" fill="currentColor" stroke="#e3f1a8" strokeWidth=".6" /></svg>
      <div className="ml-auto text-right text-[14.5px] leading-[20px] tracking-[-0.05px]"><div>12:42 AM</div><div>3/25/2025</div></div>
      <svg viewBox="0 0 18 20" className="mr-[24px] ml-[11px] h-[19px] w-[18px] shrink-0"><path d="M2.500 15V8.500C2.500 5 5 3.500 9 3.500V8l5 2v5z" fill="currentColor" /><path d="M.5 15.500h15M6.500 18h4" stroke="currentColor" strokeWidth="2" /><path d="M12 1.200h4.500l-4.500 5h4.500" fill="none" stroke="currentColor" strokeWidth="1.500" /><path d="M6.500 8h4l-4 5h4" fill="none" stroke="#e3f1a8" strokeWidth="1.300" /></svg>
    </footer>
  );
}

export default function App() {
  return (
    <div className="relative flex h-[1079px] w-[1905px] flex-col overflow-hidden bg-white font-['Open_Sans','Noto_Sans','DejaVu_Sans',sans-serif]">
      <TabStrip />
      <Toolbar />
      <JiraNav />
      <div className="flex h-[857px]">
        <Sidebar />
        <main className="flex h-full w-[1236px] shrink-0 overflow-hidden pl-[27px]">
          <IssueLeft />
          <IssueRight />
          <div className="ml-auto flex w-[19px] flex-col items-center bg-[#fcfcfc] pt-[6px] pr-[1px]">
            <Arrow />
            <span className="mt-[7px] h-[572px] w-[11px] shrink-0 rounded-full bg-[#8b8b8b]" />
            <span className="mt-[248px]"><Arrow down /></span>
          </div>
        </main>
        <Help />
      </div>
      <Flag />
      <Taskbar />
    </div>
  );
}
